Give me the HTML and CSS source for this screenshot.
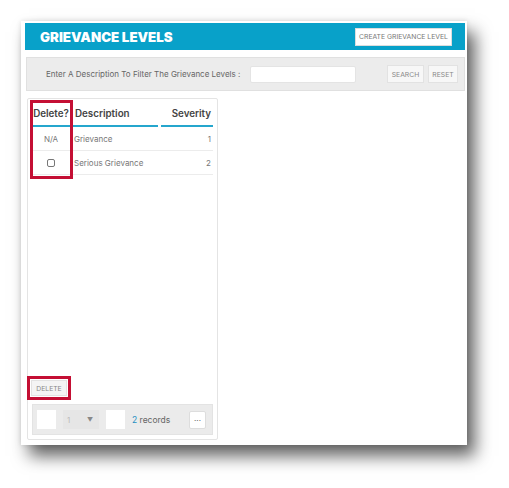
FILE: index.html
```html
<!DOCTYPE html>
<html>
<head>
<meta charset="UTF-8">
<title>Grievance Levels</title>
<link rel="stylesheet" href="styles.css">
</head>
<body>

<div class="window">
	<div class="titlebar">
		<h1>GRIEVANCE LEVELS</h1>
		<button type="button" class="btn create">CREATE GRIEVANCE LEVEL</button>
	</div>

	<div class="filter">
		<span class="lbl">Enter A Description To Filter The Grievance Levels :</span>
		<input type="text" class="txt">
		<div class="btns">
			<button type="button" class="btn search">SEARCH</button>
			<button type="button" class="btn reset">RESET</button>
		</div>
	</div>

	<div class="card">
		<div class="grid">
			<div class="row head">
				<div class="c del">Delete?</div>
				<div class="c desc">Description</div>
				<div class="c sev">Severity</div>
			</div>
			<div class="row">
				<div class="c del na">N/A</div>
				<div class="c desc">Grievance</div>
				<div class="c sev">1</div>
			</div>
			<div class="row">
				<div class="c del"><span class="chk"></span></div>
				<div class="c desc">Serious Grievance</div>
				<div class="c sev">2</div>
			</div>
			<div class="mark"></div>
		</div>

		<div class="spacer"></div>

		<div class="delwrap">
			<button type="button" class="btn del-btn">DELETE</button>
		</div>

		<div class="pager">
			<span class="box"></span>
			<span class="sel">1 <i>&#9660;</i></span>
			<span class="box"></span>
			<span class="rec"><b>2</b> records</span>
			<span class="more">...</span>
		</div>
	</div>
</div>

</body>
</html>
```

FILE: styles.css
```css
* {box-sizing: border-box;}
html {background: #fff;}
body {margin: 0; padding: 21px 0 43px 21px; background: #fff; font-family: "Inter", "Noto Sans", sans-serif;}

.window {width: 446px; height: 424px; background: #fff;
	padding: 2px 2px 0 4px; display: flex; flex-direction: column;
	box-shadow: 0 0 5px rgba(0,0,0,0.12), 8px 11px 16px rgba(0,0,0,0.62);}

.titlebar {height: 27px; background: #08a1c9; display: flex; align-items: center;
	justify-content: space-between; padding: 0 13px 0 15px;}
.titlebar h1 {margin: 0; color: #fff; font-size: 13.3px; font-weight: 900; letter-spacing: 0;}

.btn {font-family: inherit; background: #f7f7f7; color: #888; border: 1px solid #e2e2e2;
	font-size: 6.8px; padding: 0; height: 18px; cursor: pointer;}
.create {background: #fff; height: 18px; width: 97px; border-color: #ddd; color: #777;}

.filter {margin: 7px 0 0 1px; height: 34px; background: #ececec; border: 1px solid #e0e0e0;
	display: flex; align-items: center; padding: 0 6px 0 19px;}
.filter .lbl {font-size: 8px; color: #666;}
.filter .txt {width: 106px; height: 17px; margin-left: 10px; border: 1px solid #e4e4e4;
	background: #fff; border-radius: 2px;}
.filter .btns {margin-left: auto; display: flex; gap: 4px;}
.filter .search {width: 37px;}
.filter .reset {width: 30px;}

.card {margin: 7px 0 5px 2px; width: 191px; flex: 1; border: 1px solid #e4e4e4; border-radius: 2px;
	display: flex; flex-direction: column; padding: 0 4px 4px 4px;}

.grid {position: relative;}
.row {display: grid; grid-template-columns: 38px 85px 1fr; gap: 3px; height: 24px;
	align-items: center; border-bottom: 1px solid #ececec; font-size: 8px; color: #777;}
.row.head {height: 28px; border-bottom: none; font-size: 9.8px; font-weight: 600; color: #444;}
.row.head .c {height: 100%; display: flex; align-items: center; padding-top: 2px; border-bottom: 2px solid #25a6cd;}
.row.head .sev {justify-content: flex-end;}
.c.desc {padding-left: 1px;}
.row.head .desc {padding-left: 2px;}
.c.del {text-align: center;}
.row.head .del {justify-content: center;}
.c.sev {text-align: right; padding-right: 2px;}
.c.na {color: #777;}
.chk {display: inline-block; width: 8px; height: 8px; border: 1px solid #777; border-radius: 2px;
	vertical-align: middle;}

.mark {position: absolute; left: -2px; top: 1px; width: 43px; height: 79px;
	border: 3px solid #c40f34;}

.spacer {flex: 1;}

.delwrap {padding: 3px 0 0 0;}
.del-btn {height: 16px; width: 36px; padding: 0; margin-left: -1px; background: #f4f4f4;
	outline: 3px solid #c40f34; outline-offset: 1px;}

.pager {margin-top: 8px; height: 31px; background: #ebebeb; border: 1px solid #e3e3e3;
	display: flex; align-items: center; padding: 0 6px 0 4px; gap: 7px;}
.pager .box {width: 19px; height: 19px; background: #fff;}
.pager .sel {width: 36px; height: 19px; background: #e6e6e6; color: #bbb; font-size: 8px;
	display: flex; align-items: center; justify-content: space-between; padding: 0 6px 0 4px;}
.pager .sel i {font-style: normal; font-size: 6px; color: #888;}
.pager .rec {font-size: 8.5px; color: #666;}
.pager .rec b {font-weight: normal; color: #1f8fc2;}
.pager .more {margin-left: auto; width: 17px; height: 18px; background: #fff; border: 1px solid #ddd;
	border-radius: 2px; font-size: 8px; color: #555; text-align: center; line-height: 12px;}
```
